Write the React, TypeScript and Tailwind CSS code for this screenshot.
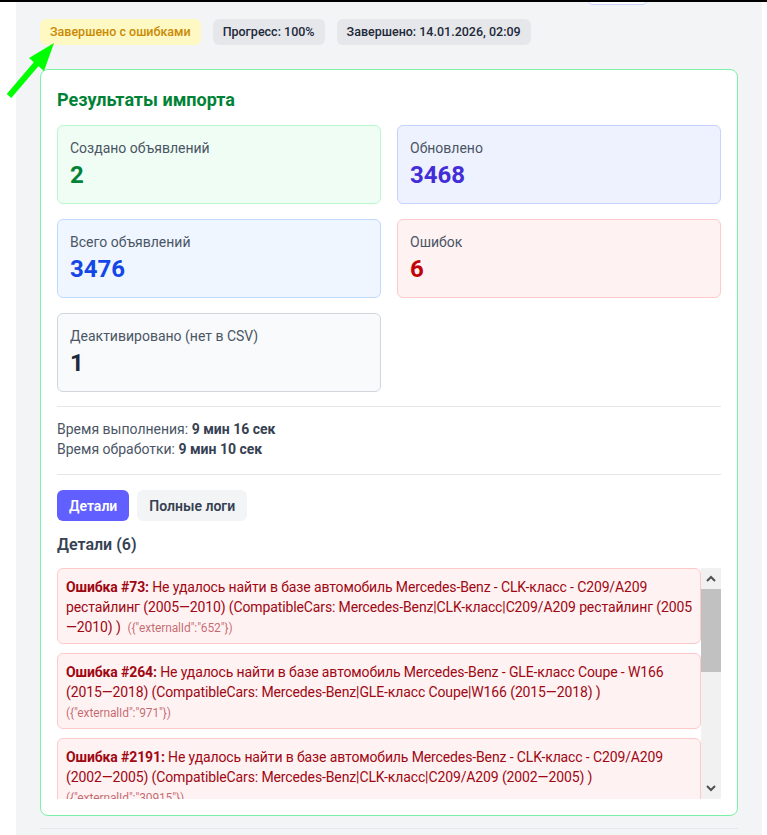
import React from 'react';

type Stat = {
  label: string;
  value: string;
  box: string;
  valueColor: string;
};

type ImportError = {
  id: number;
  message: string;
  externalId: string;
};

const stats: Stat[] = [
  { label: 'Создано объявлений', value: '2', box: 'bg-green-50 border-green-200', valueColor: 'text-green-700' },
  { label: 'Обновлено', value: '3468', box: 'bg-indigo-50 border-indigo-200', valueColor: 'text-indigo-700' },
  { label: 'Всего объявлений', value: '3476', box: 'bg-blue-50 border-blue-200', valueColor: 'text-blue-700' },
  { label: 'Ошибок', value: '6', box: 'bg-red-50 border-red-200', valueColor: 'text-red-700' },
  { label: 'Деактивировано (нет в CSV)', value: '1', box: 'bg-gray-50 border-gray-300', valueColor: 'text-gray-800' },
];

const errors: ImportError[] = [
  {
    id: 73,
    message:
      'Не удалось найти в базе автомобиль Mercedes-Benz - CLK-класс - C209/A209 рестайлинг (2005—2010) (CompatibleCars: Mercedes-Benz|CLK-класс|C209/A209 рестайлинг (2005—2010) )',
    externalId: '652',
  },
  {
    id: 264,
    message:
      'Не удалось найти в базе автомобиль Mercedes-Benz - GLE-класс Coupe - W166 (2015—2018) (CompatibleCars: Mercedes-Benz|GLE-класс Coupe|W166 (2015—2018) )',
    externalId: '971',
  },
  {
    id: 2191,
    message:
      'Не удалось найти в базе автомобиль Mercedes-Benz - CLK-класс - C209/A209 (2002—2005) (CompatibleCars: Mercedes-Benz|CLK-класс|C209/A209 (2002—2005) )',
    externalId: '30915',
  },
  {
    id: 2840,
    message:
      'Не удалось найти в базе автомобиль Mercedes-Benz - E-класс - W212 (2009—2013) (CompatibleCars: Mercedes-Benz|E-класс|W212 (2009—2013) )',
    externalId: '31877',
  },
  {
    id: 3012,
    message:
      'Не удалось найти в базе автомобиль Mercedes-Benz - ML-класс - W164 (2005—2008) (CompatibleCars: Mercedes-Benz|ML-класс|W164 (2005—2008) )',
    externalId: '32410',
  },
  {
    id: 3301,
    message:
      'Не удалось найти в базе автомобиль Mercedes-Benz - S-класс - W221 (2005—2009) (CompatibleCars: Mercedes-Benz|S-класс|W221 (2005—2009) )',
    externalId: '33102',
  },
];

function StatCard({ stat }: { stat: Stat }) {
  return (
    <div className={`rounded-md border px-3 py-3 ${stat.box}`}>
      <div className="text-sm leading-5 text-gray-600">{stat.label}</div>
      <div className={`mt-px text-2xl leading-8 font-bold ${stat.valueColor}`}>{stat.value}</div>
    </div>
  );
}

function ErrorItem({ error }: { error: ImportError }) {
  return (
    <div className="rounded-md border border-red-200 bg-red-50 pt-2 pb-1.5 pl-2 pr-1 text-sm leading-5 tracking-[-0.12px] text-red-800">
      <span className="font-bold">Ошибка #{error.id}:</span> {error.message}
      {'\u00a0 '}
      <span className="text-xs text-red-800/60">({`{"externalId":"${error.externalId}"}`})</span>
    </div>
  );
}

function FakeScrollbar() {
  return (
    <div className="flex w-[20px] shrink-0 flex-col bg-[#f1f1f1]">
      <div className="flex h-[21px] items-center justify-center">
        <svg width="10" height="7" viewBox="0 0 10 7">
          <path d="M1 6 L5 2 L9 6" fill="none" stroke="#505050" strokeWidth="2" />
        </svg>
      </div>
      <div className="h-[83px] bg-[#c1c1c1]" />
      <div className="flex-1" />
      <div className="flex h-[21px] items-center justify-center">
        <svg width="10" height="7" viewBox="0 0 10 7">
          <path d="M1 1 L5 5 L9 1" fill="none" stroke="#505050" strokeWidth="2" />
        </svg>
      </div>
    </div>
  );
}

export default function App() {
  return (
    <div className="relative min-h-[835px] bg-white font-['Roboto','Liberation_Sans',sans-serif]">
      <div className="h-[2px] w-full bg-black" />
      <div className="ml-4 mr-[5px] h-[833px] overflow-hidden bg-[#f3f4f6] px-6">
        <div className="flex justify-end pr-[90px]">
          <div className="-mt-[30px] h-[33px] w-[61px] rounded-md border border-indigo-200 bg-white" />
        </div>

        <div className="mt-[14px] flex gap-3 text-[12.5px] leading-4 font-medium">
          <span className="rounded-md bg-yellow-100 px-2.5 py-[5px] text-[#ca8a04]">Завершено с ошибками</span>
          <span className="rounded-md bg-gray-200 px-2.5 py-[5px] text-gray-800">Прогресс: 100%</span>
          <span className="rounded-md bg-gray-200 px-2.5 py-[5px] text-gray-800">Завершено: 14.01.2026, 02:09</span>
        </div>

        <div className="mt-6 rounded-lg border border-green-300 bg-white p-4">
          <h2 className="mb-[11px] text-lg leading-7 font-bold text-green-700">Результаты импорта</h2>

          <div className="grid grid-cols-2 gap-x-4 gap-y-[15px]">
            {stats.map((s) => (
              <StatCard key={s.label} stat={s} />
            ))}
          </div>

          <div className="mt-[14px] border-t border-gray-200 pt-3 text-sm leading-5 text-gray-600">
            <div>
              Время выполнения: <span className="font-bold text-gray-700">9 мин 16 сек</span>
            </div>
            <div>
              Время обработки: <span className="font-bold text-gray-700">9 мин 10 сек</span>
            </div>
          </div>

          <div className="mt-[15px] border-t border-gray-200 pt-[15px]">
            <div className="flex gap-2 text-sm font-semibold">
              <button className="h-[31px] rounded-md bg-indigo-500 px-3 text-white">Детали</button>
              <button className="h-[31px] rounded-md bg-gray-100 px-3 text-gray-700">Полные логи</button>
            </div>

            <h3 className="mt-3 text-base leading-6 font-semibold text-gray-700">Детали (6)</h3>

            <div className="mt-[11px] flex h-[231px]">
              <div className="flex flex-1 flex-col gap-[9px] overflow-hidden">
                {errors.map((e) => (
                  <ErrorItem key={e.id} error={e} />
                ))}
              </div>
              <FakeScrollbar />
            </div>
          </div>
        </div>

        <div className="mt-3 border-t border-gray-200" />
      </div>

      {/* annotation arrow over the status badge */}
      <svg className="pointer-events-none absolute left-0 top-0" width="70" height="110" viewBox="0 0 70 110">
        <line x1="9" y1="96" x2="38" y2="62" stroke="#00ff00" strokeWidth="6" strokeLinecap="butt" />
        <polygon points="54,43 29,58 44,71" fill="#00ff00" />
      </svg>
    </div>
  );
}
